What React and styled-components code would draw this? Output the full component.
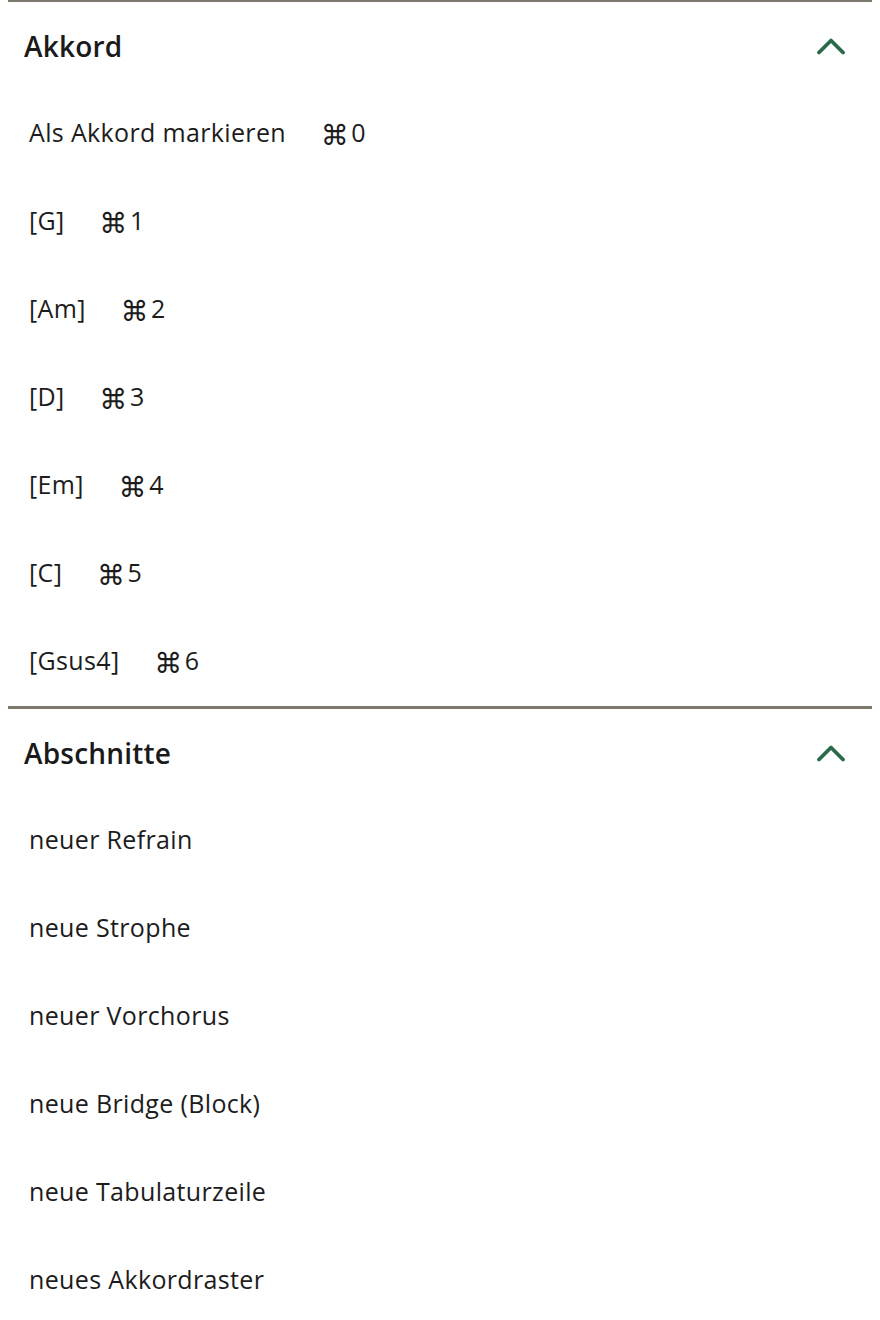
import styled, { createGlobalStyle } from "styled-components";

const GlobalStyle = createGlobalStyle`
    *, *::before, *::after {
        box-sizing: border-box;
    }

    body {
        margin: 0 8px;
        background: #ffffff;
        font-family: "Open Sans", "Noto Sans", sans-serif;
        color: #1c1c1c;
    }
`;

const sections = [
    {
        title: "Akkord",
        items: [
            { label: "Als Akkord markieren", key: "0" },
            { label: "[G]", key: "1" },
            { label: "[Am]", key: "2" },
            { label: "[D]", key: "3" },
            { label: "[Em]", key: "4" },
            { label: "[C]", key: "5" },
            { label: "[Gsus4]", key: "6" },
        ],
    },
    {
        title: "Abschnitte",
        items: [
            { label: "neuer Refrain" },
            { label: "neue Strophe" },
            { label: "neuer Vorchorus" },
            { label: "neue Bridge (Block)" },
            { label: "neue Tabulaturzeile" },
            { label: "neues Akkordraster" },
        ],
    },
];

const Chevron = () => (
    <svg width="28" height="20" viewBox="0 0 28 20">
        <polyline points="2,16.5 14,4.5 26,16.5" fill="none" stroke="#2a6a4b" strokeWidth="3.8" strokeLinecap="round" strokeLinejoin="round" />
    </svg>
);

const App = () => {
    return (
        <>
            <GlobalStyle />
            <Panel>
                {sections.map((section) => (
                    <Section key={section.title}>
                        <Header>
                            <h2>{section.title}</h2>
                            <Chevron />
                        </Header>
                        <List>
                            {section.items.map((item) => (
                                <Item key={item.label}>
                                    <span>{item.label}</span>
                                    {item.key && (
                                        <Shortcut>
                                            <Cmd>⌘</Cmd>
                                            {item.key}
                                        </Shortcut>
                                    )}
                                </Item>
                            ))}
                        </List>
                    </Section>
                ))}
            </Panel>
        </>
    );
};

export default App;

// the panel is scrolled by a pixel, so the first border is cut at the top
const Panel = styled.div`
    width: 100%;
    margin-top: -1px;
    display: flex;
    flex-direction: column;
`;

const Section = styled.section`
    border-top: 3px solid #7e786e;
`;

const Header = styled.div`
    height: 87px;
    display: flex;
    align-items: center;
    justify-content: space-between;
    padding: 0 27px 0 16px;

    h2 {
        margin: 0;
        font-size: 28px;
        font-weight: 600;
        letter-spacing: 0.2px;
        color: #1a1a1a;
    }
`;

const List = styled.ul`
    list-style: none;
    margin: 0;
    padding: 0 0 1px;
`;

const Item = styled.li`
    height: 88px;
    display: flex;
    align-items: center;
    padding: 0 0 2px 21px;
    font-size: 25px;
    letter-spacing: 0.35px;
`;

const Shortcut = styled.span`
    margin-left: 35px;
    display: inline-flex;
    align-items: baseline;
`;

const Cmd = styled.span`
    font-family: "DejaVu Sans", sans-serif;
    font-size: 28px;
    line-height: 1;
    position: relative;
    top: 3px;
    margin-right: 2px;
`;
